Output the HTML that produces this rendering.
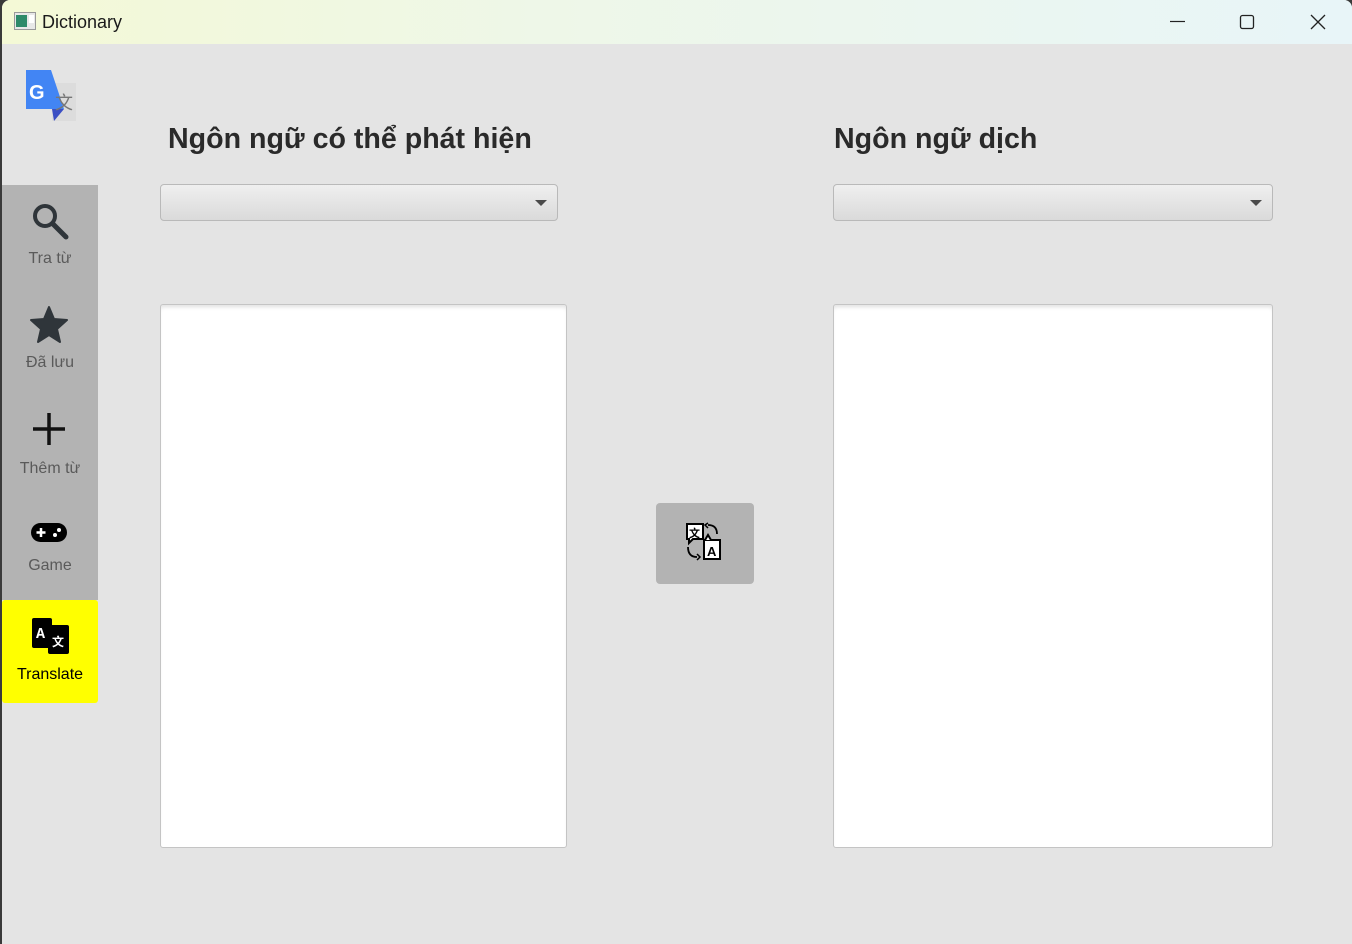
<!DOCTYPE html>
<html><head><meta charset="utf-8"><style>
*{margin:0;padding:0;box-sizing:border-box}
body{width:1352px;height:944px;overflow:hidden;background:#3a3a3a;font-family:"Liberation Sans",sans-serif;position:relative}
#win{position:absolute;left:2px;top:0;width:1350px;height:944px;background:#e4e4e4;border-radius:8px 8px 0 0;overflow:hidden}
#title{position:absolute;left:0;top:0;width:1350px;height:44px;background:linear-gradient(90deg,#f4f9d6 0%,#eef7e8 40%,#e8f5f8 100%)}
#title .t{position:absolute;left:40px;top:12px;font-size:18px;color:#1a1a1a}
.abs{position:absolute}
.side{position:absolute;left:0;width:96px;text-align:center;font-size:16px;color:#5a5a5a}
h1{position:absolute;font-size:28.6px;font-weight:bold;color:#2a2a2a;top:123px}
.combo{position:absolute;top:184px;height:37px;border:1px solid #b9b9b9;border-radius:4px;background:linear-gradient(#efefef,#dadada)}
.combo:after{content:"";position:absolute;right:10px;top:15px;border-left:6px solid transparent;border-right:6px solid transparent;border-top:6px solid #4a4a4a}
.area{position:absolute;top:304px;height:544px;background:#fff;border:1px solid #c4c4c4;border-radius:3px;box-shadow:inset 0 4px 4px -2px #e0e0e0}
</style></head><body>
<div id="win">
<div id="title">
<svg class="abs" style="left:12px;top:12px" width="22" height="18"><rect x="0.5" y="0.5" width="21" height="17" fill="#e8e8e8" stroke="#999"/><rect x="2" y="3" width="11" height="12" fill="#2e8a6a"/><rect x="15" y="3" width="5" height="8" fill="#fff"/></svg>
<div class="t">Dictionary</div>
<svg class="abs" style="left:1168px;top:14px" width="160" height="18"><line x1="0" y1="7.5" x2="15" y2="7.5" stroke="#222" stroke-width="1.2"/><rect x="70.5" y="1.5" width="13" height="13" rx="2" fill="none" stroke="#222" stroke-width="1.3"/><path d="M141 1 L155 15 M155 1 L141 15" stroke="#222" stroke-width="1.3"/></svg>
</div>
<svg class="abs" style="left:22px;top:69px" width="54" height="54"><rect x="28" y="14" width="24" height="38" fill="#dcdcdc"/><path d="M2 1 H27 L40 40 H2 Z" fill="#4285f4"/><path d="M28 40 L40 40 L30 52 Z" fill="#3b4fc4"/><text x="5" y="30" font-family="Liberation Sans" font-weight="bold" font-size="20" fill="#fff">G</text><text x="31" y="40" font-family="Noto Sans CJK SC" font-size="18" fill="#777">文</text></svg>
<div class="abs" style="left:0;top:185px;width:96px;height:415px;background:#b3b3b3"></div>
<div class="abs" style="left:0;top:600px;width:96px;height:103px;background:#ffff00;border-radius:3px"></div>
<svg class="abs" style="left:28px;top:201px" width="40" height="40"><circle cx="15" cy="15" r="10" fill="none" stroke="#2f353a" stroke-width="4"/><line x1="23" y1="23" x2="36" y2="36" stroke="#2f353a" stroke-width="5" stroke-linecap="round"/></svg>
<div class="side" style="top:250px">Tra từ</div>
<svg class="abs" style="left:27px;top:305px" width="40" height="40"><path d="M20 2 L25 14 L38 15 L28 24 L31 37 L20 30 L9 37 L12 24 L2 15 L15 14 Z" fill="#2f353a" stroke="#2f353a" stroke-width="2" stroke-linejoin="round"/></svg>
<div class="side" style="top:354px">Đã lưu</div>
<svg class="abs" style="left:27px;top:410px" width="40" height="40"><path d="M20 3 V35 M4 19 H36" stroke="#111" stroke-width="3.5"/></svg>
<div class="side" style="top:460px">Thêm từ</div>
<svg class="abs" style="left:27px;top:520px" width="40" height="26"><rect x="2" y="3" width="36" height="19" rx="9.5" fill="#000"/><path d="M12 8 V17 M7.5 12.5 H16.5" stroke="#fff" stroke-width="2.5"/><circle cx="26" cy="15" r="2" fill="#fff"/><circle cx="30" cy="10" r="2" fill="#fff"/></svg>
<div class="side" style="top:557px">Game</div>
<svg class="abs" style="left:29px;top:617px" width="40" height="40"><rect x="1" y="1" width="20" height="30" rx="2" fill="#000"/><rect x="17" y="8" width="21" height="29" rx="2" fill="#000"/><text x="5" y="21" font-family="Liberation Mono" font-size="15" font-weight="bold" fill="#fff">A</text><text x="21" y="29" font-family="Noto Sans CJK SC" font-size="12" font-weight="bold" fill="#fff">文</text></svg>
<div class="side" style="top:666px;color:#000">Translate</div>

<h1 style="left:166px">Ngôn ngữ có thể phát hiện</h1>
<h1 style="left:832px">Ngôn ngữ dịch</h1>
<div class="combo" style="left:158px;width:398px"></div>
<div class="combo" style="left:831px;width:440px"></div>
<div class="area" style="left:158px;width:407px"></div>
<div class="area" style="left:831px;width:440px"></div>
<div class="abs" style="left:654px;top:503px;width:98px;height:81px;background:#b3b3b3;border-radius:4px"></div>
<svg class="abs" style="left:682px;top:522px" width="42" height="42"><path d="M3 2 H19 V17 H9 L5 21 V17 H3 Z" fill="#fff" stroke="#000" stroke-width="2"/><text x="5" y="15" font-family="Noto Sans CJK SC" font-size="11" font-weight="bold">文</text><path d="M20 18 H36 V37 H20 Z" fill="#fff" stroke="#000" stroke-width="2"/><path d="M21 18 L24 13 L27 18" fill="#fff" stroke="#000" stroke-width="2"/><text x="23" y="34" font-family="Liberation Sans" font-size="13" font-weight="bold">A</text><path d="M24 3 Q33 3 33 12" fill="none" stroke="#000" stroke-width="1.8"/><path d="M24 1 L21 3 L24 6" fill="none" stroke="#000" stroke-width="1.5"/><path d="M4 25 Q4 35 13 35" fill="none" stroke="#000" stroke-width="1.8"/><path d="M13 32 L16 35 L13 38" fill="none" stroke="#000" stroke-width="1.5"/></svg>
</div>
</body></html>
